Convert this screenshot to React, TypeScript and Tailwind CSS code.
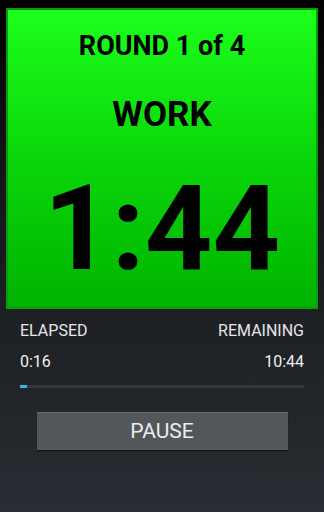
import React from 'react';

const App: React.FC = () => {
  const elapsedPct = 2.5;

  return (
    <div
      className="w-[324px] h-[512px] flex flex-col bg-[linear-gradient(to_bottom,#000000_0%,#121416_30%,#1c1f23_60%,#24272c_85%,#2a2d33_100%)]"
      style={{ fontFamily: 'Roboto, "Liberation Sans", sans-serif' }}
    >
      {/* status panel */}
      <div className="mx-[6px] mt-[8px] h-[301px] border-2 border-[#0c9a0c] bg-[linear-gradient(to_bottom,#1cff1c_0%,#0ad60a_50%,#00b300_100%)] flex flex-col items-center">
        <p className="mt-[20px] text-[27px] leading-[32px] font-bold text-black">ROUND 1 of 4</p>
        <p className="mt-[33px] text-[35px] leading-[40px] font-bold text-black">WORK</p>
        <p className="mt-[35px] text-[118px] leading-[118px] font-bold text-black">1:44</p>
      </div>

      <div className="px-[20px] pt-[11px]">
        <div className="flex justify-between text-[16px] leading-[22px] text-[#e6e6e6]">
          <span>ELAPSED</span>
          <span>REMAINING</span>
        </div>
        <div className="mt-[9px] flex justify-between text-[16px] leading-[22px] text-[#f0f0f0]">
          <span>0:16</span>
          <span>10:44</span>
        </div>
        <div className="mt-[12px] h-[3px] bg-[#35383d]">
          <div className="h-full bg-[#33b5e5]" style={{ width: `${elapsedPct}%` }}></div>
        </div>
      </div>

      <div className="mt-[24px] flex justify-center">
        <button className="w-[251px] h-[38px] bg-[#545759] border-t border-[#6a6d70] shadow-[0_1px_1px_rgba(0,0,0,0.5)] text-[21px] text-[#ececec]">
          PAUSE
        </button>
      </div>
    </div>
  );
};

export default App;
